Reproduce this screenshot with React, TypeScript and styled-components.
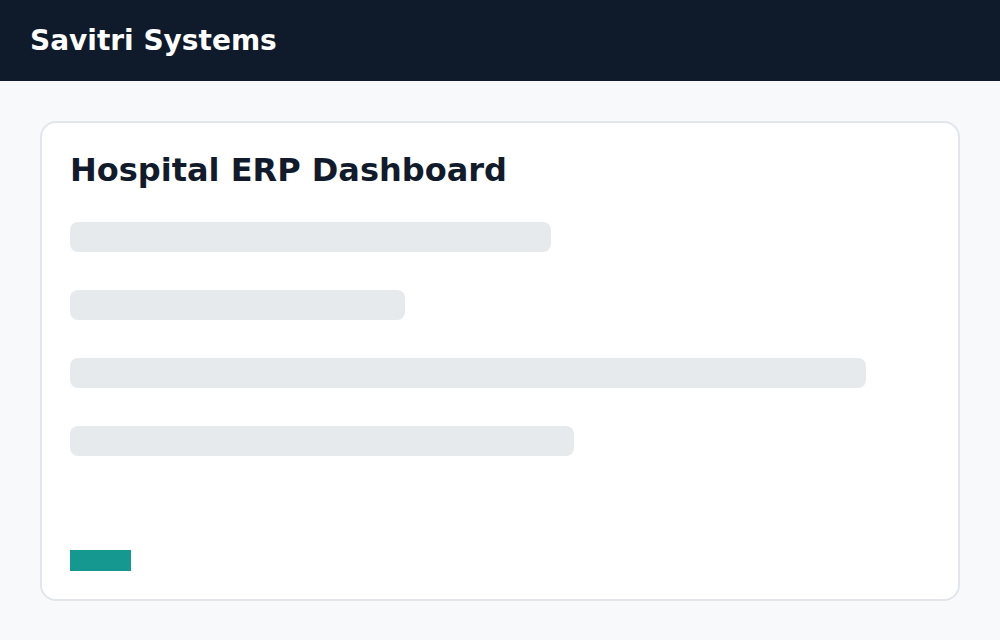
import React from "react";
import styled, { createGlobalStyle } from "styled-components";

const Global = createGlobalStyle`
  html, body { margin: 0; padding: 0; }
  body {
    background: #f7f9fb;
    font-family: "DejaVu Sans", "Liberation Sans", sans-serif;
  }
`;

const Page = styled.div`
  min-height: 640px;
  display: flex;
  flex-direction: column;
`;

const Header = styled.header`
  height: 81px;
  background: #0f1b2b;
  display: flex;
  align-items: center;
  padding: 0 30px;
  box-sizing: border-box;
`;

const Brand = styled.h1`
  margin: 0;
  color: #ffffff;
  font-size: 28px;
  font-weight: 700;
  line-height: 1;
`;

const Main = styled.main`
  padding: 40px;
`;

const Card = styled.section`
  background: #ffffff;
  border: 2px solid #e2e6ea;
  border-radius: 16px;
  padding: 27px 28px 28px;
  height: 480px;
  box-sizing: border-box;
  display: flex;
  flex-direction: column;
`;

const Title = styled.h2`
  margin: 0 0 32px;
  color: #111b2b;
  font-size: 32px;
  font-weight: 700;
  line-height: 40px;
`;

const Bars = styled.div`
  display: flex;
  flex-direction: column;
  gap: 38px;
`;

const Bar = styled.div<{ $w: number }>`
  width: ${(p) => p.$w}px;
  height: 30px;
  background: #e7eaed;
  border-radius: 8px;
`;

const Spacer = styled.div`
  flex: 1;
`;

const Action = styled.button`
  width: 61px;
  height: 21px;
  border: none;
  border-radius: 0;
  padding: 0;
  background: #149890;
  align-self: flex-start;
`;

const widths = [481, 335, 796, 504];

export default function App() {
  return (
    <>
      <Global />
      <Page>
        <Header>
          <Brand>Savitri Systems</Brand>
        </Header>
        <Main>
          <Card>
            <Title>Hospital ERP Dashboard</Title>
            <Bars>
              {widths.map((w, i) => (
                <Bar key={i} $w={w} />
              ))}
            </Bars>
            <Spacer />
            <Action aria-label="action" />
          </Card>
        </Main>
      </Page>
    </>
  );
}
